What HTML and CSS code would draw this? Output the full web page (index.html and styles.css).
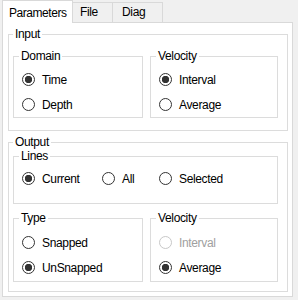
FILE: index.html
```html
<!DOCTYPE html>
<html lang="en">
<head>
    <meta charset="UTF-8">
    <meta name="viewport" content="width=device-width, initial-scale=1.0">
    <title>Parameters</title>
    <link rel="stylesheet" href="styles.css">
</head>
<body>
    <div class="tabs">
        <div class="tab active">Parameters</div>
        <div class="tab tab_file">File</div>
        <div class="tab tab_diag">Diag</div>
    </div>
    <div class="panel">
        <fieldset class="outer input_box">
            <legend>Input</legend>
            <div class="pair">
                <fieldset class="inner">
                    <legend>Domain</legend>
                    <label class="opt"><input type="radio" name="domain" checked>Time</label>
                    <label class="opt"><input type="radio" name="domain">Depth</label>
                </fieldset>
                <fieldset class="inner">
                    <legend>Velocity</legend>
                    <label class="opt"><input type="radio" name="vel_in" checked>Interval</label>
                    <label class="opt"><input type="radio" name="vel_in">Average</label>
                </fieldset>
            </div>
        </fieldset>

        <fieldset class="outer output_box">
            <legend>Output</legend>
            <fieldset class="inner lines">
                <legend>Lines</legend>
                <div class="line_opts">
                    <label class="opt"><input type="radio" name="lines" checked>Current</label>
                    <label class="opt"><input type="radio" name="lines">All</label>
                    <label class="opt"><input type="radio" name="lines">Selected</label>
                </div>
            </fieldset>
            <div class="pair pair_low">
                <fieldset class="inner type_box">
                    <legend>Type</legend>
                    <label class="opt"><input type="radio" name="type">Snapped</label>
                    <label class="opt"><input type="radio" name="type" checked>UnSnapped</label>
                </fieldset>
                <fieldset class="inner">
                    <legend>Velocity</legend>
                    <label class="opt off"><input type="radio" name="vel_out" disabled>Interval</label>
                    <label class="opt"><input type="radio" name="vel_out" checked>Average</label>
                </fieldset>
            </div>
        </fieldset>
    </div>
</body>
</html>
```

FILE: styles.css
```css
*{
    box-sizing: border-box;
}
body{
    margin: 0px;
    background: #f0f0f0;
    font-family: "Liberation Sans", Arial, sans-serif;
    font-size: 12px;
    letter-spacing: -0.35px;
    color: #000;
}
.tabs{
    display: flex;
    align-items: flex-end;
    height: 22px;
    padding-left: 2px;
}
.tab{
    height: 20px;
    line-height: 19px;
    padding-left: 7px;
    border: 1px solid #d9d9d9;
    border-left: none;
    border-bottom: none;
    background: #f0f0f0;
}
.tab.active{
    width: 71px;
    height: 23px;
    line-height: 24px;
    padding-left: 6px;
    letter-spacing: -0.45px;
    margin-bottom: -1px;
    border-left: 1px solid #d9d9d9;
    background: #fff;
    position: relative;
    z-index: 1;
}
.tab_file{
    width: 40px;
}
.tab_diag{
    width: 50px;
    padding-left: 9px;
}
.panel{
    width: 291px;
    margin-left: 2px;
    padding: 4px 0px 4px 5px;
    border: 1px solid #d9d9d9;
    background: #fff;
}
fieldset{
    margin: 0px;
    min-width: 0px;
    border: 1px solid #dcdcdc;
}
legend{
    padding: 0px 2px;
    height: 14px;
    line-height: 14px;
}
.outer{
    width: 280px;
}
.input_box{
    padding: 8px 9px 12px 4px;
}
.output_box{
    margin-top: 4px;
    padding: 0px 9px 9px 4px;
}
.pair{
    display: grid;
    grid-template-columns: 130px 128px;
    column-gap: 7px;
}
.pair_low{
    margin-top: 7px;
}
.inner{
    padding: 4px 0px 0px 5px;
}
.lines{
    width: 265px;
    padding: 3px 0px 12px 5px;
}
.type_box{
    padding-top: 5px;
    padding-bottom: 1px;
}
.type_box + .inner{
    padding-top: 5px;
    padding-bottom: 1px;
}
.opt{
    display: flex;
    align-items: center;
    height: 25px;
}
.line_opts{
    display: grid;
    grid-template-columns: 80px 57px auto;
}
.off{
    color: #a0a0a0;
}
input[type=radio]{
    appearance: none;
    -webkit-appearance: none;
    width: 13px;
    height: 13px;
    margin: 0px 7px 0px 3px;
    border: 1px solid #333;
    border-radius: 50%;
    background: #fff;
    flex: none;
}
input[type=radio]:checked{
    background: radial-gradient(circle, #333 0px, #333 3.4px, #fff 4px);
}
input[type=radio]:disabled{
    border-color: #c8c8c8;
}
```
